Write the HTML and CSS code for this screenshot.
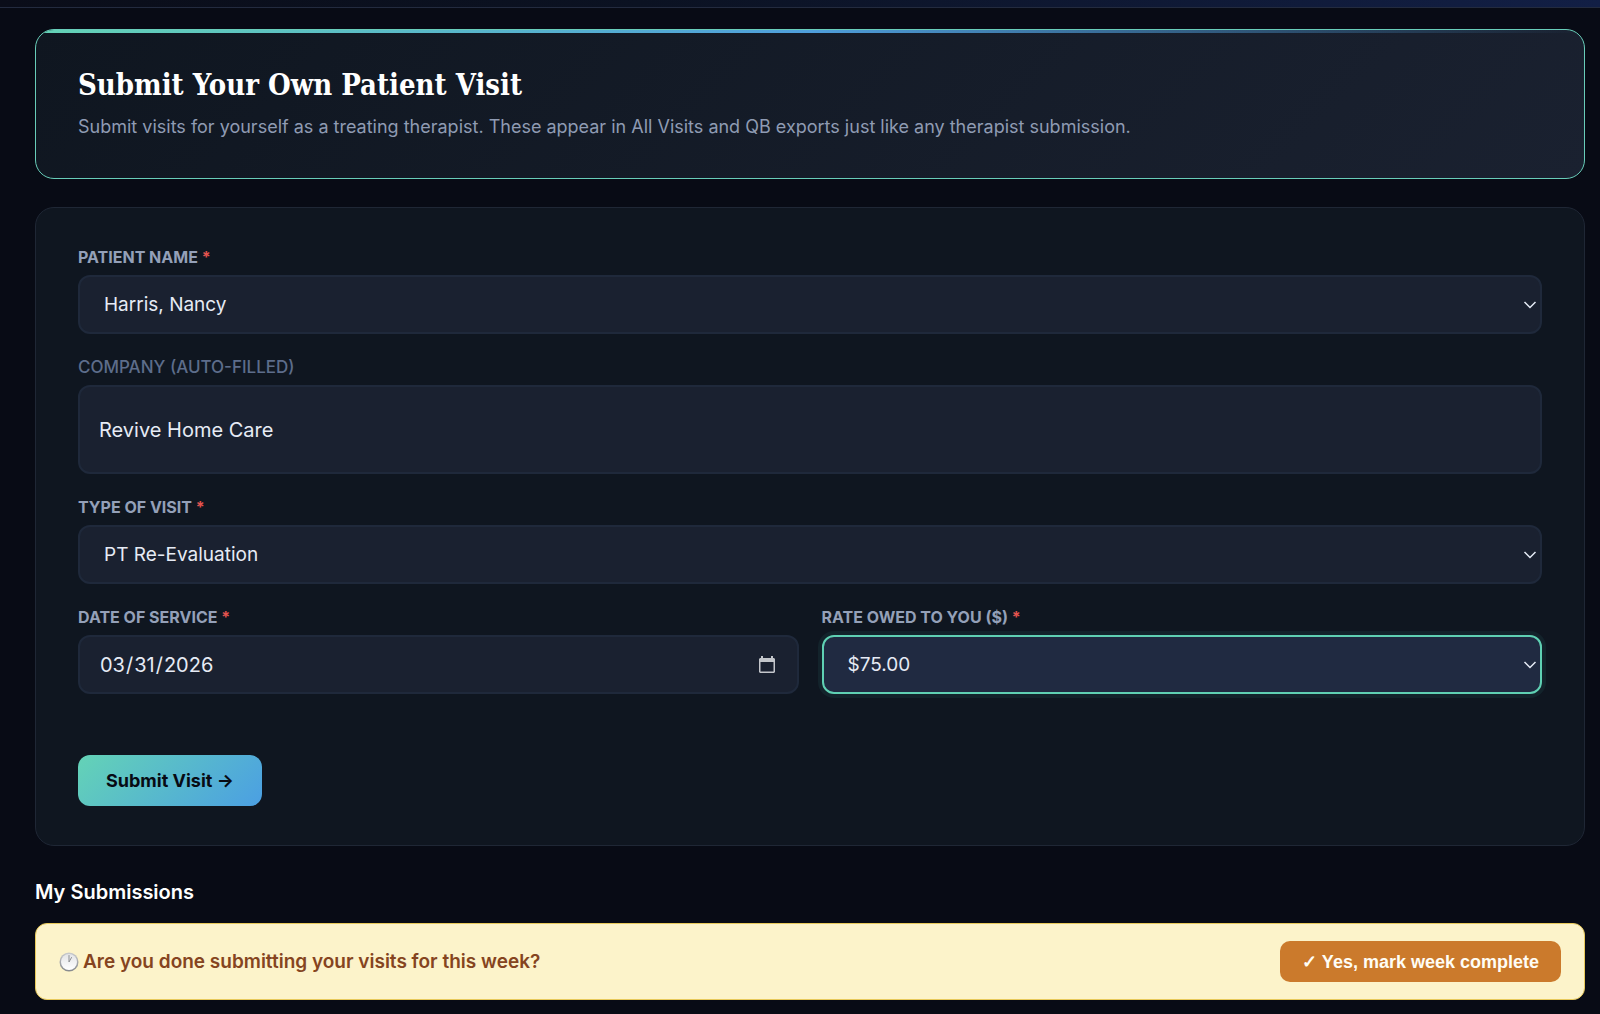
FILE: index.html
```html
<!DOCTYPE html>
<html lang="en">

<head>
    <meta charset="utf-8">
    <title>Submit Visit</title>
    <meta name="viewport" content="width=device-width, initial-scale=1">
    <link rel="stylesheet" href="styles.css">
</head>

<body>
    <header class="topbar"></header>

    <main>
        <section class="card intro">
            <h1>Submit Your Own Patient Visit</h1>
            <p>Submit visits for yourself as a treating therapist. These appear in All Visits and QB exports just like any therapist submission.</p>
        </section>

        <form class="card visitForm">
            <div class="field">
                <label for="patient">PATIENT NAME <span class="req">*</span></label>
                <div class="selectWrap">
                    <select id="patient" name="patient" required>
                        <option>Harris, Nancy</option>
                    </select>
                    <svg class="chevron" viewBox="0 0 14 8" aria-hidden="true">
                        <path d="M1.5 1L7 6.5L12.5 1" />
                    </svg>
                </div>
            </div>

            <div class="field">
                <label class="muted" for="company">COMPANY (AUTO-FILLED)</label>
                <input class="company" type="text" id="company" name="company" value="Revive Home Care" readonly>
            </div>

            <div class="field">
                <label for="visitType">TYPE OF VISIT <span class="req">*</span></label>
                <div class="selectWrap">
                    <select id="visitType" name="visitType" required>
                        <option>PT Re-Evaluation</option>
                    </select>
                    <svg class="chevron" viewBox="0 0 14 8" aria-hidden="true">
                        <path d="M1.5 1L7 6.5L12.5 1" />
                    </svg>
                </div>
            </div>

            <div class="row">
                <div class="field">
                    <label for="date">DATE OF SERVICE <span class="req">*</span></label>
                    <div class="selectWrap">
                        <input type="date" id="date" name="date" value="2026-03-31" required>
                        <svg class="calendar" viewBox="0 0 16 18" aria-hidden="true">
                            <path fill-rule="evenodd" d="M2 0h2v2h8V0h2v2h1l1 1v13l-1 1H1l-1-1V3l1-1h1zM1.5 6v9.5h13V6z" />
                        </svg>
                    </div>
                </div>
                <div class="field">
                    <label for="rate">RATE OWED TO YOU ($) <span class="req">*</span></label>
                    <div class="selectWrap">
                        <select class="active" id="rate" name="rate" required>
                            <option>$75.00</option>
                        </select>
                        <svg class="chevron" viewBox="0 0 14 8" aria-hidden="true">
                            <path d="M1.5 1L7 6.5L12.5 1" />
                        </svg>
                    </div>
                </div>
            </div>

            <button class="submitBtn" type="submit">Submit Visit →</button>
        </form>

        <h2>My Submissions</h2>

        <section class="weekBanner">
            <p>
                <svg class="clock" viewBox="0 0 20 20" aria-hidden="true">
                    <defs>
                        <linearGradient id="rim" x1="0" y1="0" x2="0" y2="1">
                            <stop offset="0" stop-color="#c9cbce" />
                            <stop offset="1" stop-color="#85888c" />
                        </linearGradient>
                        <linearGradient id="face" x1="0" y1="0" x2="0" y2="1">
                            <stop offset="0" stop-color="#e3e4e6" />
                            <stop offset="1" stop-color="#ffffff" />
                        </linearGradient>
                    </defs>
                    <circle cx="10" cy="10" r="9.5" fill="url(#rim)" />
                    <circle cx="10" cy="10" r="8" fill="url(#face)" />
                    <path d="M10 3.5V10L12.5 5.5" fill="none" stroke="#8d8f92" stroke-width="1" stroke-linecap="round" />
                </svg>
                Are you done submitting your visits for this week?
            </p>
            <button class="weekBtn" type="button">✓ Yes, mark week complete</button>
        </section>
    </main>
</body>

</html>
```

FILE: styles.css
```css
* {
    box-sizing: border-box;
    padding: 0;
    margin: 0;
}

body {
    background-color: #080b15;
    color: #e6ebf5;
    font-family: Inter, "Liberation Sans", sans-serif;
    font-size: 20px;
}

.topbar {
    height: 8px;
    background: linear-gradient(90deg, #0a0d19, #0b1222 40%, #121f45);
    border-bottom: 1px solid #232b3f;
}

main {
    padding: 21px 15px 13px 35px;
}

.card {
    border: 1px solid #1f2735;
    border-radius: 19px;
    background-color: #0f1620;
    padding: 39px 42px;
}

.intro {
    position: relative;
    overflow: hidden;
    border-color: #68cdb9;
    background: linear-gradient(135deg, #0f1620, #1a2130);
    padding: 34px 42px 37px;
    margin-bottom: 28px;

    /* accent strip along the top edge */
    &::before {
        content: "";
        position: absolute;
        top: 0;
        left: 0;
        right: 0;
        height: 3px;
        background: linear-gradient(90deg, #64d3b6, #4f9fdc 50%, transparent);
    }

    & h1 {
        font-family: "DejaVu Serif Condensed", "DejaVu Serif", serif;
        font-size: 29px;
        line-height: 42px;
        font-weight: 700;
        color: #ffffff;
        margin-bottom: 7px;
    }

    & p {
        font-size: 18px;
        line-height: 28px;
        color: #8f9bb3;
    }
}

.visitForm {
    display: flex;
    flex-direction: column;
    gap: 23px;
}

.field {
    display: flex;
    flex-direction: column;
    gap: 8px;

    & label {
        font-size: 16px;
        line-height: 20px;
        font-weight: 700;
        color: #94a0b8;
    }

    & label.muted {
        font-size: 17px;
        font-weight: 500;
        color: #5d6d8b;
    }

    & .req {
        color: #e5534f;
    }

    & input,
    & select {
        appearance: none;
        width: 100%;
        height: 59px;
        padding: 0 19px;
        border: 2px solid #1f293b;
        border-radius: 12px;
        background-color: #1a2130;
        color: #e6ebf5;
        font-family: inherit;
        font-size: 20px;
        outline: none;
    }

    & select {
        padding: 0 24px;
        font-size: 19px;
    }

    & input.company {
        height: 89px;
    }

    & select:focus,
    & select.active {
        border-color: #5fd0b3;
        background-color: #202a41;
        box-shadow: 0 0 0 4px #13232b;
    }

    & input::-webkit-calendar-picker-indicator {
        opacity: 0;
    }
}

.row {
    display: grid;
    grid-template-columns: 1fr 1fr;
    gap: 23px;
}

.selectWrap {
    display: grid;
    align-items: center;

    & > * {
        grid-area: 1 / 1;
    }

    & svg {
        justify-self: end;
        pointer-events: none;
        z-index: 1;
    }
}

.chevron {
    width: 14px;
    height: 8px;
    margin-right: 5px;
    fill: none;
    stroke: #e6ebf5;
    stroke-width: 1.5;
}

.calendar {
    width: 16px;
    height: 18px;
    margin-right: 24px;
    fill: #c3c6cb;
}

.submitBtn {
    align-self: flex-start;
    height: 51px;
    padding: 0 28px;
    margin-top: 38px;
    border: none;
    border-radius: 12px;
    background: linear-gradient(135deg, #64d3b6, #4b9fe3);
    color: #070b14;
    font-family: inherit;
    font-size: 18px;
    font-weight: 700;
}

h2 {
    font-size: 20px;
    line-height: 28px;
    font-weight: 600;
    color: #ffffff;
    margin: 32px 0 17px;
}

.weekBanner {
    display: flex;
    align-items: center;
    justify-content: space-between;
    padding: 17px 23px;
    border: 1px solid #e8c95a;
    border-radius: 12px;
    background-color: #fcf3ca;

    & p {
        display: flex;
        align-items: center;
        gap: 4px;
        font-size: 19px;
        font-weight: 600;
        color: #854420;
    }
}

.clock {
    width: 20px;
    height: 20px;
}

.weekBtn {
    height: 41px;
    padding: 0 22px;
    border: none;
    border-radius: 10px;
    background-color: #cb7a2c;
    color: #fffdf5;
    font-family: "Liberation Sans", Arial, sans-serif;
    font-size: 18px;
    font-weight: 700;
}
```
